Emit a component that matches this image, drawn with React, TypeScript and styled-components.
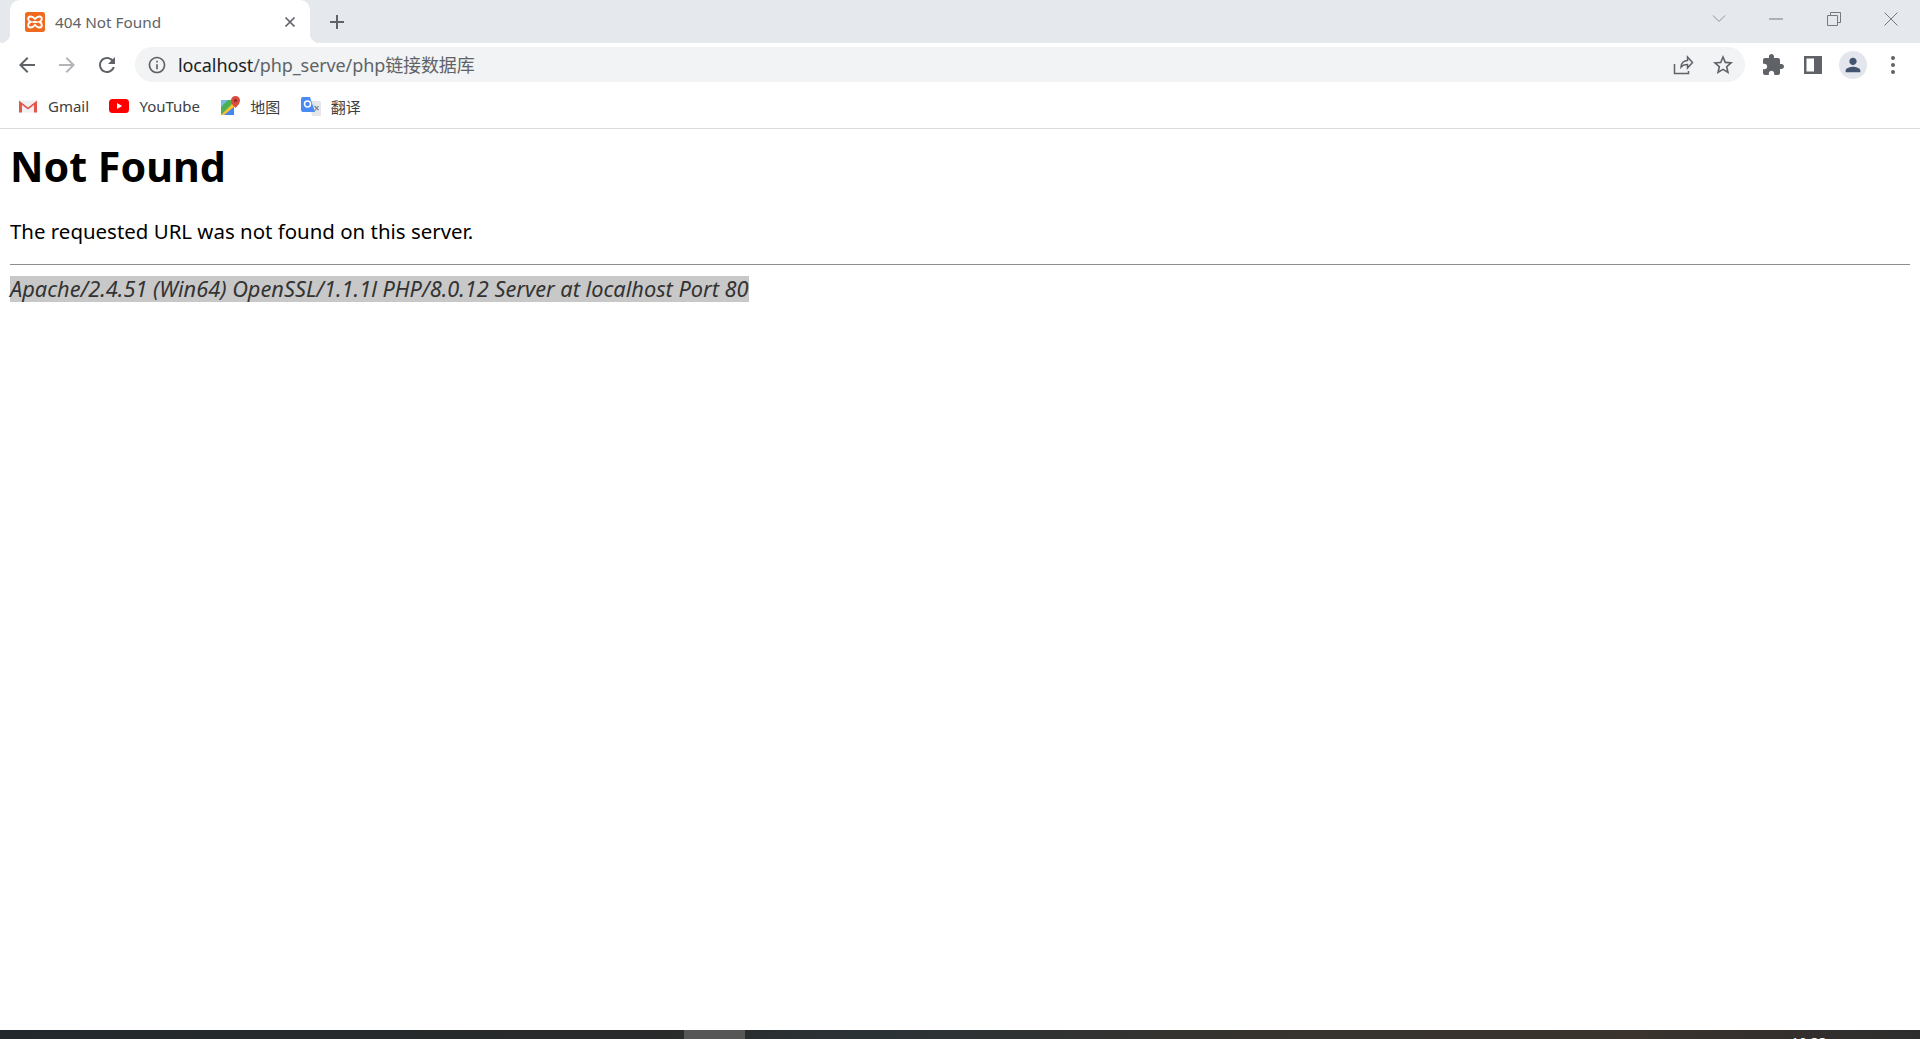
import React from "react";
import styled, { createGlobalStyle } from "styled-components";

const GlobalStyle = createGlobalStyle`
  html, body {
    margin: 0;
    padding: 0;
    height: 100%;
    overflow: hidden;
    background: #fff;
  }
  #root {
    height: 100%;
  }
`;

const UI_FONT = `"Noto Sans", "Noto Sans CJK SC", sans-serif`;

const Window = styled.div`
  height: 1039px;
  display: flex;
  flex-direction: column;
  overflow: hidden;
  font-family: ${UI_FONT};
`;

const TabStrip = styled.div`
  flex: none;
  height: 43px;
  display: flex;
  align-items: stretch;
  padding-left: 10px;
  background: #e5e8ec;
`;

const Tab = styled.div`
  position: relative;
  width: 300px;
  box-sizing: border-box;
  display: flex;
  align-items: center;
  padding: 0 12px 0 15px;
  background: #fff;
  border-radius: 10px 10px 0 0;

  &::before,
  &::after {
    content: "";
    position: absolute;
    bottom: 0;
    width: 10px;
    height: 10px;
  }
  &::before {
    left: -10px;
    background: radial-gradient(circle at 0 0, transparent 10px, #fff 10.5px);
  }
  &::after {
    right: -10px;
    background: radial-gradient(circle at 100% 0, transparent 10px, #fff 10.5px);
  }
`;

const Favicon = styled.svg`
  width: 20px;
  height: 20px;
  flex: none;
`;

const TabTitle = styled.span`
  flex: 1;
  margin-left: 10px;
  font-size: 15.3px;
  color: #5f6368;
  white-space: nowrap;
`;

const TabClose = styled.svg`
  width: 16px;
  height: 16px;
  flex: none;
`;

const NewTab = styled.div`
  width: 24px;
  margin-left: 15px;
  display: flex;
  align-items: center;
  justify-content: center;
`;

const WindowControls = styled.div`
  margin-left: auto;
  display: flex;
  align-items: flex-start;
`;

const WindowControl = styled.div`
  width: 57.5px;
  height: 37px;
  display: flex;
  align-items: center;
  justify-content: center;
`;

const Toolbar = styled.div`
  flex: none;
  height: 43px;
  display: flex;
  align-items: center;
  padding: 0 7px;
  background: #fff;
`;

const ToolButton = styled.div`
  flex: none;
  width: 40px;
  height: 35px;
  display: flex;
  align-items: center;
  justify-content: center;
`;

const Omnibox = styled.div`
  flex: 1;
  height: 35px;
  margin: 0 8px;
  padding: 0 2px 0 12px;
  display: flex;
  align-items: center;
  background: #f1f3f4;
  border-radius: 18px;
`;

const Url = styled.div`
  flex: 1;
  margin-left: 11px;
  padding-bottom: 2px;
  font-size: 18px;
  letter-spacing: -0.1px;
  color: #5f6368;
  white-space: nowrap;
`;

const UrlHost = styled.span`
  color: #202124;
`;

const Avatar = styled.div`
  width: 28px;
  height: 28px;
  border-radius: 50%;
  background: #e3e6ec;
  display: flex;
  align-items: center;
  justify-content: center;
`;

const BookmarkBar = styled.div`
  flex: none;
  height: 40px;
  display: flex;
  align-items: center;
  padding: 0 0 2px 18px;
  gap: 20.3px;
  background: #fff;
  border-bottom: 1px solid #dadce0;
`;

const Bookmark = styled.div`
  display: flex;
  align-items: center;
  gap: 10px;
  font-size: 15px;
  color: #3c4043;
  white-space: nowrap;
`;

const BookmarkIcon = styled.svg`
  width: 20px;
  height: 20px;
  flex: none;
`;

const Page = styled.main`
  flex: 1;
  padding: 0 10px;
  color: #000;
  background: #fff;
  font-family: "Noto Sans", "Open Sans", sans-serif;
`;

const Heading = styled.h1`
  margin: 8px 0 0;
  font-size: 41.2px;
  line-height: 58px;
  font-weight: 700;
`;

const Message = styled.p`
  margin: 22px 0 0;
  font-size: 20.45px;
  line-height: 28px;
`;

const Rule = styled.hr`
  margin: 19px 0 0;
  border: 0;
  height: 1px;
  background: #8e8e8e;
`;

const Signature = styled.address`
  margin-top: 11px;
  font-size: 21.77px;
  line-height: 26px;
  font-style: italic;
  color: #333;
`;

const Selected = styled.span`
  display: inline-block;
  background: #c8c8c8;
`;

const Taskbar = styled.div`
  flex: none;
  height: 9px;
  display: flex;
  overflow: hidden;
  background: linear-gradient(90deg, #22282c 0%, #2a2b2b 36%, #2b3236 45%, #36332e 65%, #3a332e 85%, #2d2d2d 100%);
`;

const TaskButton = styled.div`
  width: 61px;
  margin-left: 684px;
  background: #565656;
`;

const Clock = styled.div`
  margin-left: 1046px;
  font-size: 14px;
  line-height: 14px;
  padding-top: 6px;
  color: #fff;
  white-space: nowrap;
`;

const ICON_GREY = "#5f6368";

const Glyph = ({ d, size = 24, color = ICON_GREY }: { d: string; size?: number; color?: string }) => (
  <svg width={size} height={size} viewBox="0 0 24 24">
    <path d={d} fill={color} />
  </svg>
);

export default function App() {
  return (
    <>
      <GlobalStyle />
      <Window>
        <TabStrip>
          <Tab>
            <Favicon viewBox="0 0 20 20">
              <rect width="20" height="20" rx="2.5" fill="#ef6a1f" />
              <path
                d="M5.5 4.500c2 0 3.300 1 4.500 2.500 1.200-1.500 2.500-2.500 4.500-2.500 1.400 0 2.300 1.100 2.300 2.600 0 1.300-.8 2.300-2.300 2.900 1.500.6 2.300 1.600 2.300 2.900 0 1.500-.9 2.600-2.300 2.600-2 0-3.300-1-4.500-2.500-1.200 1.500-2.500 2.500-4.500 2.500-1.400 0-2.300-1.100-2.300-2.600 0-1.300.8-2.300 2.300-2.900-1.500-.6-2.300-1.600-2.300-2.900 0-1.500.9-2.600 2.300-2.600z"
                fill="none"
                stroke="#fff"
                strokeWidth="1.900"
              />
              <path d="M7.500 10h5" stroke="#fff" strokeWidth="1.900" />
            </Favicon>
            <TabTitle>404 Not Found</TabTitle>
            <TabClose viewBox="0 0 16 16">
              <path d="M3.500 3.500l9 9m0-9l-9 9" stroke="#5f6368" strokeWidth="1.700" fill="none" />
            </TabClose>
          </Tab>
          <NewTab>
            <svg width="16" height="16" viewBox="0 0 16 16">
              <path d="M8 1v14M1 8h14" stroke="#5f6368" strokeWidth="2" fill="none" />
            </svg>
          </NewTab>
          <WindowControls>
            <WindowControl>
              <svg width="14" height="9" viewBox="0 0 14 9">
                <path d="M1 1.500l6 6 6-6" stroke="#8d9094" strokeWidth="1" fill="none" />
              </svg>
            </WindowControl>
            <WindowControl>
              <svg width="14" height="2" viewBox="0 0 14 2">
                <path d="M0 1h14" stroke="#77797c" strokeWidth="1" fill="none" />
              </svg>
            </WindowControl>
            <WindowControl>
              <svg width="14" height="14" viewBox="0 0 14 14">
                <path d="M.5 3.500h10v10H.5zM3.500 3.500v-3h10v10h-3" stroke="#77797c" strokeWidth="1" fill="none" />
              </svg>
            </WindowControl>
            <WindowControl>
              <svg width="14" height="14" viewBox="0 0 14 14">
                <path d="M.5.500l13 13m0-13l-13 13" stroke="#77797c" strokeWidth="1" fill="none" />
              </svg>
            </WindowControl>
          </WindowControls>
        </TabStrip>

        <Toolbar>
          <ToolButton>
            <Glyph d="M20 11H7.830l5.590-5.590L12 4l-8 8 8 8 1.410-1.410L7.830 13H20v-2z" />
          </ToolButton>
          <ToolButton>
            <Glyph d="M12 4l-1.410 1.410L16.170 11H4v2h12.170l-5.580 5.590L12 20l8-8z" color="#b3b5b8" />
          </ToolButton>
          <ToolButton>
            <Glyph d="M17.650 6.350C16.200 4.900 14.210 4 12 4c-4.420 0-7.990 3.580-7.990 8s3.570 8 7.990 8c3.730 0 6.840-2.550 7.730-6h-2.080c-.82 2.330-3.040 4-5.650 4-3.310 0-6-2.690-6-6s2.690-6 6-6c1.660 0 3.140.69 4.220 1.780L13 11h7V4l-2.350 2.350z" />
          </ToolButton>
          <Omnibox>
            <Glyph
              size={20}
              d="M11 7h2v2h-2zm0 4h2v6h-2zm1-9C6.480 2 2 6.480 2 12s4.480 10 10 10 10-4.480 10-10S17.520 2 12 2zm0 18c-4.410 0-8-3.590-8-8s3.590-8 8-8 8 3.590 8 8-3.590 8-8 8z"
            />
            <Url>
              <UrlHost>localhost</UrlHost>/php_serve/php链接数据库
            </Url>
            <ToolButton>
              <svg width="22" height="22" viewBox="0 0 22 22">
                <path
                  d="M2.500 10v9.500h14V17M9 13c0-4 3-6.500 6.500-6.500V3l5 5.500-5 5.500v-3.500C12.500 10.500 10.500 11 9 13z"
                  stroke="#5f6368"
                  strokeWidth="1.500"
                  fill="none"
                />
              </svg>
            </ToolButton>
            <ToolButton>
              <Glyph d="M22 9.240l-7.190-.62L12 2 9.190 8.630 2 9.240l5.460 4.730L5.820 21 12 17.270 18.180 21l-1.630-7.030L22 9.240zM12 15.400l-3.760 2.270 1-4.280-3.320-2.880 4.380-.38L12 6.100l1.710 4.040 4.380.38-3.320 2.880 1 4.280L12 15.400z" />
            </ToolButton>
          </Omnibox>
          <ToolButton>
            <Glyph d="M20.500 11H19V7c0-1.100-.9-2-2-2h-4V3.500C13 2.120 11.880 1 10.500 1S8 2.120 8 3.500V5H4c-1.100 0-1.990.9-1.990 2v3.800H3.500c1.490 0 2.700 1.210 2.700 2.700s-1.210 2.700-2.700 2.700H2V20c0 1.100.9 2 2 2h3.800v-1.500c0-1.490 1.210-2.700 2.700-2.700 1.490 0 2.700 1.210 2.700 2.700V22H17c1.100 0 2-.9 2-2v-4h1.500c1.380 0 2.500-1.120 2.500-2.500S21.880 11 20.500 11z" />
          </ToolButton>
          <ToolButton>
            <svg width="18" height="18" viewBox="0 0 18 18">
              <path fillRule="evenodd" d="M0 0h18v18H0zM2.500 2.500v13H10v-13z" fill="#5f6368" />
            </svg>
          </ToolButton>
          <ToolButton>
            <Avatar>
              <Glyph size={22} color="#44546f" d="M12 12c2.210 0 4-1.790 4-4s-1.790-4-4-4-4 1.790-4 4 1.790 4 4 4zm0 2c-2.670 0-8 1.340-8 4v2h16v-2c0-2.660-5.330-4-8-4z" />
            </Avatar>
          </ToolButton>
          <ToolButton>
            <svg width="6" height="20" viewBox="0 0 6 20">
              <circle cx="3" cy="3" r="2" fill="#5f6368" />
              <circle cx="3" cy="10" r="2" fill="#5f6368" />
              <circle cx="3" cy="17" r="2" fill="#5f6368" />
            </svg>
          </ToolButton>
        </Toolbar>

        <BookmarkBar>
          <Bookmark>
            <BookmarkIcon viewBox="0 0 20 20">
              <path d="M1 4.500h18v12H1z" fill="#f1f1f1" />
              <path d="M1 16.500V4.500l9 7 9-7v12h-3V9l-6 4.500L4 9v7.500z" fill="#e2574c" />
            </BookmarkIcon>
            Gmail
          </Bookmark>
          <Bookmark>
            <BookmarkIcon viewBox="0 0 20 20">
              <rect y="3" width="20" height="14" rx="3.500" fill="#ff0000" />
              <path d="M8 7l5.200 3L8 13z" fill="#fff" />
            </BookmarkIcon>
            YouTube
          </Bookmark>
          <Bookmark>
            <BookmarkIcon viewBox="0 0 20 20">
              <path d="M1 4h13v15H1z" fill="#4caf50" />
              <path d="M1 4h7L1 11z" fill="#78b9e8" />
              <path d="M1 19l13-13v13z" fill="#fbc02d" />
              <path d="M4 19l10-8v8z" fill="#4285f4" />
              <path d="M15.500 0a4.500 4.500 0 0 1 4.500 4.500C20 8 15.500 12 15.500 12S11 8 11 4.500A4.500 4.500 0 0 1 15.500 0z" fill="#dc4b3e" />
              <circle cx="15.500" cy="4.500" r="1.600" fill="#8e2a22" />
            </BookmarkIcon>
            地图
          </Bookmark>
          <Bookmark>
            <BookmarkIcon viewBox="0 0 20 20">
              <path d="M8 5h10a2 2 0 0 1 2 2v12a1 1 0 0 1-1 1h-8z" fill="#e4e6ea" />
              <path d="M2 1h7l5 15H2a2 2 0 0 1-2-2V3a2 2 0 0 1 2-2z" fill="#4a8af4" />
              <circle cx="6.500" cy="8" r="3" fill="none" stroke="#fff" strokeWidth="1.500" />
              <path d="M13.500 10l4 4m0-4l-4 5" stroke="#7a8190" strokeWidth="1.200" fill="none" />
            </BookmarkIcon>
            翻译
          </Bookmark>
        </BookmarkBar>

        <Page>
          <Heading>Not Found</Heading>
          <Message>The requested URL was not found on this server.</Message>
          <Rule />
          <Signature>
            <Selected>Apache/2.4.51 (Win64) OpenSSL/1.1.1l PHP/8.0.12 Server at localhost Port 80</Selected>
          </Signature>
        </Page>

        <Taskbar>
          <TaskButton />
          <Clock>10:33</Clock>
        </Taskbar>
      </Window>
    </>
  );
}
